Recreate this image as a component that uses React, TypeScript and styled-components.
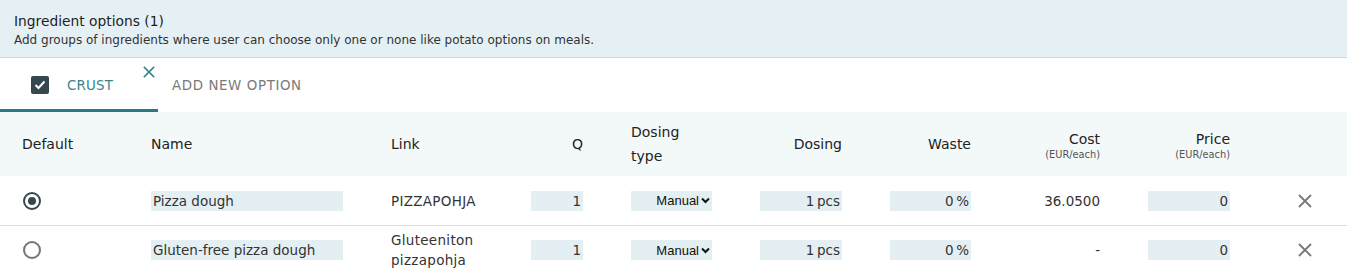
// Libraries
import styled, { createGlobalStyle } from 'styled-components';


// Global
const GlobalStyle = createGlobalStyle`
body {
  margin: 0;
  background: #ffffff;
  font-family: "DejaVu Sans", "Noto Sans", sans-serif;
  color: #222222;
}
`

// Styled Components
const Panel = styled.section`
width: 1347px;
`

const InfoBar = styled.header`
background-color: #e5f0f5;
border-bottom: 1px solid #c9dce3;
padding: 12px 14px 0;
height: 45px;
`

const Title = styled.h2`
margin: 0;
font-size: 13.8px;
font-weight: 500;
line-height: 18px;
color: #1e1e1e;
`

const Description = styled.p`
margin: 2px 0 0;
font-size: 12px;
line-height: 16px;
color: #333333;
`

const Tabs = styled.nav`
display: flex;
height: 54px;
`

const Tab = styled.div<{ $active?: boolean }>`
position: relative;
display: flex;
align-items: center;
padding: ${p => (p.$active ? '3px 0 0 31px' : '3px 0 0 14px')};
width: ${p => (p.$active ? '158px' : 'auto')};
box-sizing: border-box;
border-bottom: 3px solid ${p => (p.$active ? '#2a7883' : 'transparent')};
font-size: 13.4px;
letter-spacing: ${p => (p.$active ? '0.2px' : '0.6px')};
color: ${p => (p.$active ? '#3a8591' : '#7a7a7a')};
`

const Check = styled.span`
display: inline-flex;
align-items: center;
justify-content: center;
width: 18px;
height: 18px;
border-radius: 2px;
background-color: #37474f;
margin-right: 18px;
`

const CloseTab = styled.span`
position: absolute;
right: 3px;
top: 8px;
display: flex;
`

const Table = styled.div`
display: grid;
grid-template-columns: 129px 240px 140px 100px 129px 130px 129px 129px 150px 49px;
padding-left: 22px;
`

const HeadRow = styled.div`
display: contents;
& > * {
  background-color: #f3f8f9;
  height: 64px;
}
& > *:first-child {
  margin-left: -22px;
  padding-left: 22px;
}
`

const BodyRow = styled.div<{ $last?: boolean }>`
display: contents;
& > * {
  height: ${p => (p.$last ? '48px' : '49px')};
  border-bottom: ${p => (p.$last ? 'none' : '1px solid #dddddd')};
}
& > *:first-child {
  margin-left: -22px;
  padding-left: 22px;
}
`

const Cell = styled.div`
display: flex;
align-items: center;
font-size: 13.5px;
color: #333333;
`

const HeadCell = styled.div`
display: flex;
flex-direction: column;
justify-content: center;
align-items: flex-start;
box-sizing: border-box;
font-size: 14px;
color: #222222;
`

const HeadInner = styled.div<{ $w?: number; $right?: boolean }>`
width: ${p => (p.$w ? `${p.$w}px` : 'auto')};
text-align: ${p => (p.$right ? 'right' : 'left')};
line-height: 24px;
`

const Unit = styled.div`
font-size: 9.8px;
color: #555555;
line-height: 12px;
margin-top: -2px;
`

const Field = styled.div<{ $w: number; $right?: boolean }>`
width: ${p => p.$w}px;
height: 20px;
box-sizing: border-box;
background-color: #e4eff4;
padding: 0 2px;
display: flex;
align-items: center;
justify-content: ${p => (p.$right ? 'flex-end' : 'flex-start')};
font-size: 13.5px;
color: #333333;
white-space: pre;
`

const Select = styled.div`
width: 81px;
height: 20px;
background-color: #e4eff4;
display: flex;
align-items: center;
justify-content: flex-end;
gap: 2px;
padding-right: 2px;
box-sizing: border-box;
font-family: "Liberation Sans", Arial, sans-serif;
font-size: 13px;
color: #111111;
`

const Radio = styled.span<{ $on?: boolean }>`
width: 18px;
height: 18px;
box-sizing: border-box;
border-radius: 50%;
border: 2px solid ${p => (p.$on ? '#37474f' : '#757575')};
display: flex;
align-items: center;
justify-content: center;
margin-left: 1px;
&::after {
  content: '';
  display: ${p => (p.$on ? 'block' : 'none')};
  width: 8px;
  height: 8px;
  border-radius: 50%;
  background-color: #37474f;
}
`

const LinkText = styled.div`
font-size: 13.5px;
line-height: 20px;
letter-spacing: 0.3px;
color: #333333;
`

const Amount = styled.div`
width: 81px;
text-align: right;
font-size: 13.5px;
color: #333333;
`

const Spacer = styled.span``

function Cross({ color, size }: { color: string; size: number }): JSX.Element {
  return (
    <svg width={size} height={size} viewBox="0 0 14 14">
      <path d="M1 1L13 13M13 1L1 13" stroke={color} strokeWidth="1.8" />
    </svg>
  );
}

function Chevron(): JSX.Element {
  return (
    <svg width="9" height="7" viewBox="0 0 9 7">
      <path d="M1 1.5L4.5 5L8 1.5" stroke="#111" strokeWidth="2" fill="none" />
    </svg>
  );
}

type Row = {
  on: boolean;
  name: string;
  link: string[];
  cost: string;
};

const rows: Row[] = [
  { on: true, name: 'Pizza dough', link: ['PIZZAPOHJA'], cost: '36.0500' },
  { on: false, name: 'Gluten-free pizza dough', link: ['Gluteeniton', 'pizzapohja'], cost: '-' },
];

function App(): JSX.Element {
  return (
    <Panel>
      <GlobalStyle />
      <InfoBar>
        <Title>Ingredient options (1)</Title>
        <Description>Add groups of ingredients where user can choose only one or none like potato options on meals.</Description>
      </InfoBar>

      <Tabs>
        <Tab $active>
          <Check>
            <svg width="12" height="10" viewBox="0 0 12 10">
              <path d="M1.5 5L4.5 8L10.5 1.5" stroke="#fff" strokeWidth="2" fill="none" />
            </svg>
          </Check>
          CRUST
          <CloseTab><Cross color="#3a8591" size={12} /></CloseTab>
        </Tab>
        <Tab>ADD NEW OPTION</Tab>
      </Tabs>

      <Table>
        <HeadRow>
          <HeadCell><HeadInner>Default</HeadInner></HeadCell>
          <HeadCell><HeadInner>Name</HeadInner></HeadCell>
          <HeadCell><HeadInner>Link</HeadInner></HeadCell>
          <HeadCell><HeadInner $w={52} $right>Q</HeadInner></HeadCell>
          <HeadCell><HeadInner>Dosing<br />type</HeadInner></HeadCell>
          <HeadCell><HeadInner $w={82} $right>Dosing</HeadInner></HeadCell>
          <HeadCell><HeadInner $w={81} $right>Waste</HeadInner></HeadCell>
          <HeadCell>
            <HeadInner $w={81} $right>Cost<Unit>(EUR/each)</Unit></HeadInner>
          </HeadCell>
          <HeadCell>
            <HeadInner $w={82} $right>Price<Unit>(EUR/each)</Unit></HeadInner>
          </HeadCell>
          <Spacer />
        </HeadRow>

        {rows.map((r, i) => (
          <BodyRow key={r.name} $last={i === rows.length - 1}>
            <Cell><Radio $on={r.on} /></Cell>
            <Cell><Field $w={192}>{r.name}</Field></Cell>
            <Cell>
              <LinkText>{r.link.map(l => <div key={l}>{l}</div>)}</LinkText>
            </Cell>
            <Cell><Field $w={52} $right>1</Field></Cell>
            <Cell><Select>Manual<Chevron /></Select></Cell>
            <Cell><Field $w={82} $right>{'1\u2009pcs'}</Field></Cell>
            <Cell><Field $w={81} $right>{'0\u2009%'}</Field></Cell>
            <Cell><Amount>{r.cost}</Amount></Cell>
            <Cell><Field $w={82} $right>0</Field></Cell>
            <Cell><Cross color="#777777" size={14} /></Cell>
          </BodyRow>
        ))}
      </Table>
    </Panel>
  );
};

export default App;
